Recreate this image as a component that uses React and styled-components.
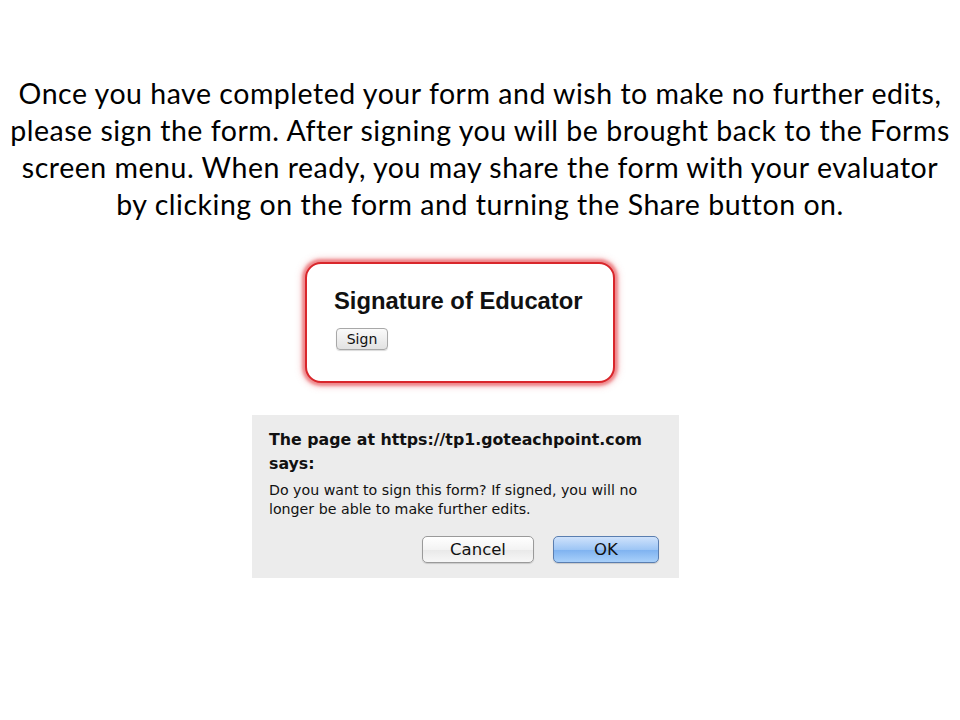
import React from 'react';
import styled, { createGlobalStyle } from 'styled-components';

const GlobalStyle = createGlobalStyle`
  html, body {
    margin: 0;
    padding: 0;
    background: #fff;
  }
`;

const Slide = styled.main`
  width: 960px;
  height: 720px;
  box-sizing: border-box;
  padding-top: 75px;
  display: flex;
  flex-direction: column;
  overflow: hidden;
`;

const Instructions = styled.p`
  margin: 0;
  font-family: Lato, 'Open Sans', sans-serif;
  font-size: 28.5px;
  letter-spacing: 0.52px;
  line-height: 37px;
  color: #000;
  text-align: center;
  white-space: nowrap;
`;

const SignatureCard = styled.section`
  margin: 39px 0 0 305px;
  width: 310px;
  height: 121px;
  box-sizing: border-box;
  border: 2px solid #d9262b;
  border-radius: 16px;
  background: #fff;
  box-shadow: 0 0 3px 3px rgba(230, 70, 75, 0.55), 0 0 6px 4px rgba(235, 120, 125, 0.35);
  padding: 24px 0 0 27px;
`;

const CardTitle = styled.h3`
  margin: 0;
  font-family: 'Liberation Sans', Arial, sans-serif;
  font-weight: 700;
  font-size: 23.8px;
  line-height: 26px;
  color: #111;
`;

const MacButton = styled.button`
  font-family: 'DejaVu Sans', sans-serif;
  color: #111;
  border-radius: 5px;
  padding: 0;
  cursor: default;
  border: 1px solid ${p => (p.$primary ? '#5a7eb0' : '#9a9a9a')};
  background: ${p =>
    p.$primary
      ? 'linear-gradient(#cfe2fb 0%, #9ec6f5 50%, #7fb2f0 52%, #a9d0fa 100%)'
      : 'linear-gradient(#ffffff 0%, #f3f3f3 50%, #e9e9e9 52%, #f7f7f7 100%)'};
  box-shadow: 0 1px 1px rgba(0, 0, 0, 0.15);
`;

const SignButton = styled(MacButton)`
  display: block;
  margin: 14px 0 0 2px;
  width: 52px;
  height: 22px;
  font-size: 14px;
  line-height: 20px;
  background: linear-gradient(#fafafa, #e2e2e2);
  border-color: #a8a8a8;
  border-radius: 4px;
`;

const Dialog = styled.section`
  margin: 32px 0 0 252px;
  width: 427px;
  height: 163px;
  box-sizing: border-box;
  background: #ececec;
  padding: 13px 18px 0 17px;
  font-family: 'DejaVu Sans', sans-serif;
  color: #111;
`;

const DialogTitle = styled.h4`
  margin: 0;
  font-weight: 700;
  font-size: 15.8px;
  line-height: 24px;
`;

const DialogBody = styled.p`
  margin: 5px 0 0;
  font-size: 14.2px;
  line-height: 18.5px;
`;

const ButtonRow = styled.div`
  display: flex;
  justify-content: flex-end;
  gap: 19px;
  margin-top: 18px;
  padding-right: 2px;
`;

const DialogButton = styled(MacButton)`
  width: ${p => p.$w}px;
  height: 27px;
  font-size: 16.5px;
  line-height: 25px;
`;

const App = () => {
  return (
    <>
      <GlobalStyle />
      <Slide>
        <Instructions>
          Once you have completed your form and wish to make no further edits,
          <br />
          please sign the form. After signing you will be brought back to the Forms
          <br />
          screen menu. When ready, you may share the form with your evaluator
          <br />
          by clicking on the form and turning the Share button on.
        </Instructions>

        <SignatureCard>
          <CardTitle>Signature of Educator</CardTitle>
          <SignButton>Sign</SignButton>
        </SignatureCard>

        <Dialog>
          <DialogTitle>
            The page at https://tp1.goteachpoint.com
            <br />
            says:
          </DialogTitle>
          <DialogBody>
            Do you want to sign this form? If signed, you will no
            <br />
            longer be able to make further edits.
          </DialogBody>
          <ButtonRow>
            <DialogButton $w={112}>Cancel</DialogButton>
            <DialogButton $w={106} $primary>OK</DialogButton>
          </ButtonRow>
        </Dialog>
      </Slide>
    </>
  );
};

export default App;
